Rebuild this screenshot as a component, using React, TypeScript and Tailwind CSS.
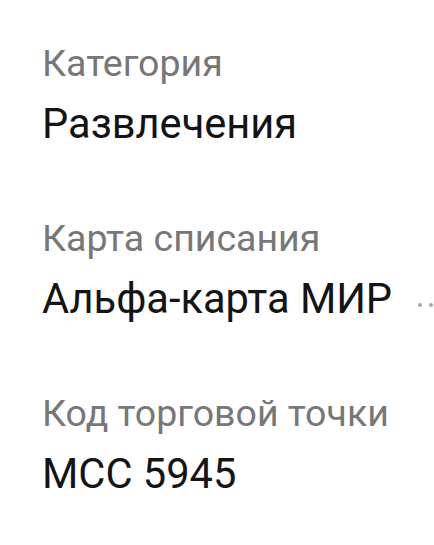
const rows = [
  { label: "Категория", value: "Развлечения" },
  { label: "Карта списания", value: "Альфа-карта МИР", more: true },
  { label: "Код торговой точки", value: "MCC 5945" },
];

export default function App() {
  return (
    <div
      className="h-[545px] w-[434px] overflow-hidden bg-white pl-[42px] pt-[41px]"
      style={{ fontFamily: "Roboto, 'Noto Sans', sans-serif" }}
    >
      <div className="flex flex-col gap-[67px]">
        {rows.map((row) => (
          <div key={row.label} className="flex flex-col gap-[14px]">
            <span className="whitespace-nowrap text-[37.5px] leading-[44px] text-[#777777]">
              {row.label}
            </span>
            <div className="flex items-center">
              <span className="whitespace-nowrap text-[41.6px] leading-[50px] text-[#141414]">
                {row.value}
              </span>
              {row.more && (
                <span className="ml-[26px] flex shrink-0 gap-[7px] pt-[12px]">
                  <span className="h-[4px] w-[4px] rounded-full bg-[#a8a8a8]"></span>
                  <span className="h-[4px] w-[4px] rounded-full bg-[#a8a8a8]"></span>
                </span>
              )}
            </div>
          </div>
        ))}
      </div>
    </div>
  );
}
